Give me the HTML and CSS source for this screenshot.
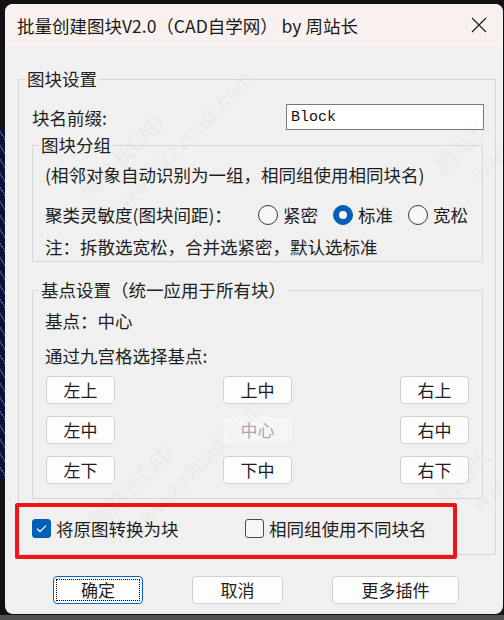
FILE: index.html
```html
<!DOCTYPE html>
<html lang="zh-CN">

<head>
    <meta charset="UTF-8">
    <meta name="viewport" content="width=device-width, initial-scale=1.0">
    <title>批量创建图块</title>
    <link rel="stylesheet" href="styles.css">
</head>

<body>
    <div class="window">
        <div class="titlebar">
            <span class="title">批量创建图块V2.0（CAD自学网） by 周站长</span>
            <svg class="close" width="16" height="16" viewBox="0 0 16 16">
                <path d="M1 1 L15 15 M15 1 L1 15" stroke="#1a1a1a" stroke-width="1.2" fill="none" />
            </svg>
        </div>

        <div class="content">
            <fieldset class="group outer">
                <legend>图块设置</legend>
                <div class="prefix-row">
                    <label for="prefix">块名前缀:</label>
                    <input id="prefix" class="prefix" type="text" value="Block">
                </div>

                <!-- 分组 -->
                <fieldset class="group inner cluster">
                    <legend>图块分组</legend>
                    <p class="line">(相邻对象自动识别为一组，相同组使用相同块名)</p>
                    <div class="line radio-row">
                        <span class="radio-label">聚类灵敏度(图块间距)：</span>
                        <span class="radio-opt"><span class="radio"></span>紧密</span>
                        <span class="radio-opt"><span class="radio on"></span>标准</span>
                        <span class="radio-opt"><span class="radio"></span>宽松</span>
                    </div>
                    <p class="line note">注：拆散选宽松，合并选紧密，默认选标准</p>
                </fieldset>

                <!-- 基点 -->
                <fieldset class="group inner base">
                    <legend>基点设置（统一应用于所有块）</legend>
                    <p class="line">基点：中心</p>
                    <p class="line pick">通过九宫格选择基点:</p>
                    <div class="grid9">
                        <button class="btn">左上</button>
                        <button class="btn">上中</button>
                        <button class="btn">右上</button>
                        <button class="btn">左中</button>
                        <button class="btn" disabled>中心</button>
                        <button class="btn">右中</button>
                        <button class="btn">左下</button>
                        <button class="btn">下中</button>
                        <button class="btn">右下</button>
                    </div>
                </fieldset>

                <div class="check-row">
                    <span class="check-opt"><span class="checkbox on">
                            <svg width="19" height="19" viewBox="0 0 19 19">
                                <path d="M5 9.8 L8 12.6 L14 6.6" stroke="#fff" stroke-width="1.3" fill="none" />
                            </svg>
                        </span>将原图转换为块</span>
                    <span class="check-opt"><span class="checkbox"></span>相同组使用不同块名</span>
                </div>
            </fieldset>

            <div class="actions">
                <button class="btn action ok">确定</button>
                <button class="btn action cancel">取消</button>
                <button class="btn action more">更多插件</button>
            </div>
        </div>

        <div class="highlight"></div>

        <div class="wm wm-a"><span>周站长CAD</span><span class="url">www.zzzcad.com</span></div>
        <div class="wm wm-b"><span>周站长</span><span class="url">www.zz</span></div>
        <div class="wm wm-c"><span>周站长CAD</span><span class="url">www.zzzcad.com</span></div>
        <div class="wm wm-d"><span>周站长</span><span class="url">www.zz</span></div>
    </div>
</body>

</html>
```

FILE: styles.css
```css
* {
    box-sizing: border-box;
}

body {
    margin: 0;
    padding: 4px 0 0 5px;
    height: 620px;
    overflow: hidden;
    font-family: "Noto Sans CJK SC", "Noto Sans", sans-serif;
    background:
        repeating-linear-gradient(60deg, #0b1236 0 6px, #3a5bb0 6px 7px) 0 130px / 5px 350px no-repeat,
        linear-gradient(to bottom, #121212 615px, #505050 615px);
}

.window {
    position: relative;
    width: 498px;
    height: 610px;
    background-color: #f0f0f0;
    border-radius: 8px;
    overflow: hidden;
    color: #1e1e1e;
    font-size: 17.5px;
}

.titlebar {
    height: 42px;
    display: flex;
    align-items: center;
    padding: 0 16px 0 12px;
    background-color: #f8f1ef;
}

.title {
    font-size: 17.5px;
    color: #1a1a1a;
    white-space: nowrap;
}

.close {
    margin-left: auto;
}

.content {
    padding: 0 7px 0 13px;
}

.group {
    margin: 0;
    border: 1px solid #d8d8d8;
    min-inline-size: 0;
}

.group legend {
    padding: 0 2px;
    line-height: 20px;
    font-size: 17.5px;
    color: #222;
}

.outer {
    margin-top: 23px;
    padding: 15px 12px 14px 13px;
}

.outer > legend {
    margin-left: -7px;
}

.inner {
    padding: 8px 12px 2px 12px;
}

.inner > legend {
    margin-left: -6px;
}

.line {
    margin: 0;
    line-height: 24px;
    white-space: nowrap;
}

.prefix-row {
    display: flex;
    align-items: center;
    height: 26px;
}

.prefix {
    margin-left: auto;
    margin-right: -1px;
    width: 198px;
    height: 26px;
    border: 1px solid #7a7a7a;
    background: #fff;
    padding: 0 4px;
    font-family: "Liberation Mono", monospace;
    font-size: 15px;
    color: #111;
}

.cluster {
    margin-top: 5px;
}

.radio-row {
    display: flex;
    align-items: center;
    margin-top: 16px;
}

.radio-label {
    width: 213px;
    flex-shrink: 0;
}

.radio-opt {
    display: flex;
    align-items: center;
    flex-shrink: 0;
    gap: 5px;
    margin-right: 15px;
}

.radio-opt:last-child {
    margin-right: 0;
}

.radio {
    width: 20px;
    height: 20px;
    border-radius: 50%;
    border: 1px solid #3a3a3a;
    background: #f7f7f7;
    display: flex;
    align-items: center;
    justify-content: center;
}

.radio.on {
    border-color: #005fb8;
    background: #005fb8;
}

.radio.on::after {
    content: "";
    width: 8px;
    height: 8px;
    border-radius: 50%;
    background: #fff;
}

.note {
    margin-top: 8px;
}

.base {
    margin-top: 18px;
    padding: 9px 12px 14px 12px;
}

.pick {
    margin-top: 11px;
}

.grid9 {
    display: grid;
    grid-template-columns: repeat(3, 69px);
    grid-auto-rows: 28px;
    column-gap: 108px;
    row-gap: 12px;
    margin-top: 8px;
    padding-left: 1px;
}

.btn {
    font-family: "Noto Sans CJK SC", "Noto Sans", sans-serif;
    font-size: 17px;
    color: #1e1e1e;
    background: #fdfdfd;
    border: 1px solid #d0d0d0;
    border-radius: 4px;
    padding: 0;
    line-height: 24px;
}

.btn:disabled {
    background: #f6f6f6;
    border-color: #f2f2f2;
    color: #a8a8a8;
}

.check-row {
    display: grid;
    grid-template-columns: 213px auto;
    align-items: center;
    height: 24px;
    margin-top: 17px;
}

.check-opt {
    display: flex;
    align-items: center;
    gap: 5px;
    white-space: nowrap;
}

.checkbox {
    width: 19px;
    height: 19px;
    border-radius: 3px;
    border: 1px solid #4a4a4a;
    background: #f6f6f6;
    display: flex;
}

.checkbox.on {
    border-color: #005fb8;
    background: #005fb8;
}

.checkbox.on svg {
    margin: -1px;
}

.actions {
    display: flex;
    gap: 49px;
    margin: 21px 0 0 35px;
}

.action {
    height: 28px;
}

.ok {
    width: 90px;
    border-color: #0067c0;
    outline: 1px dotted #000;
    outline-offset: -4px;
}

.cancel {
    width: 91px;
}

.more {
    width: 127px;
}

/* 红色标注框 */
.highlight {
    position: absolute;
    left: 10px;
    top: 499px;
    width: 442px;
    height: 56px;
    border: 4px solid #f01515;
    border-radius: 2px;
    pointer-events: none;
}

/* 水印 */
.wm {
    position: absolute;
    display: flex;
    flex-direction: column;
    gap: 8px;
    transform: rotate(-45deg);
    color: rgba(0, 0, 0, 0.045);
    font-size: 22px;
    line-height: 26px;
    white-space: nowrap;
    pointer-events: none;
}

.wm .url {
    margin-left: 20px;
    font-family: "Liberation Sans", sans-serif;
    letter-spacing: 1px;
}

.wm-a {
    left: 60px;
    top: 100px;
}

.wm-b {
    left: 430px;
    top: 110px;
}

.wm-c {
    left: 70px;
    top: 430px;
}

.wm-d {
    left: 430px;
    top: 440px;
}
```
